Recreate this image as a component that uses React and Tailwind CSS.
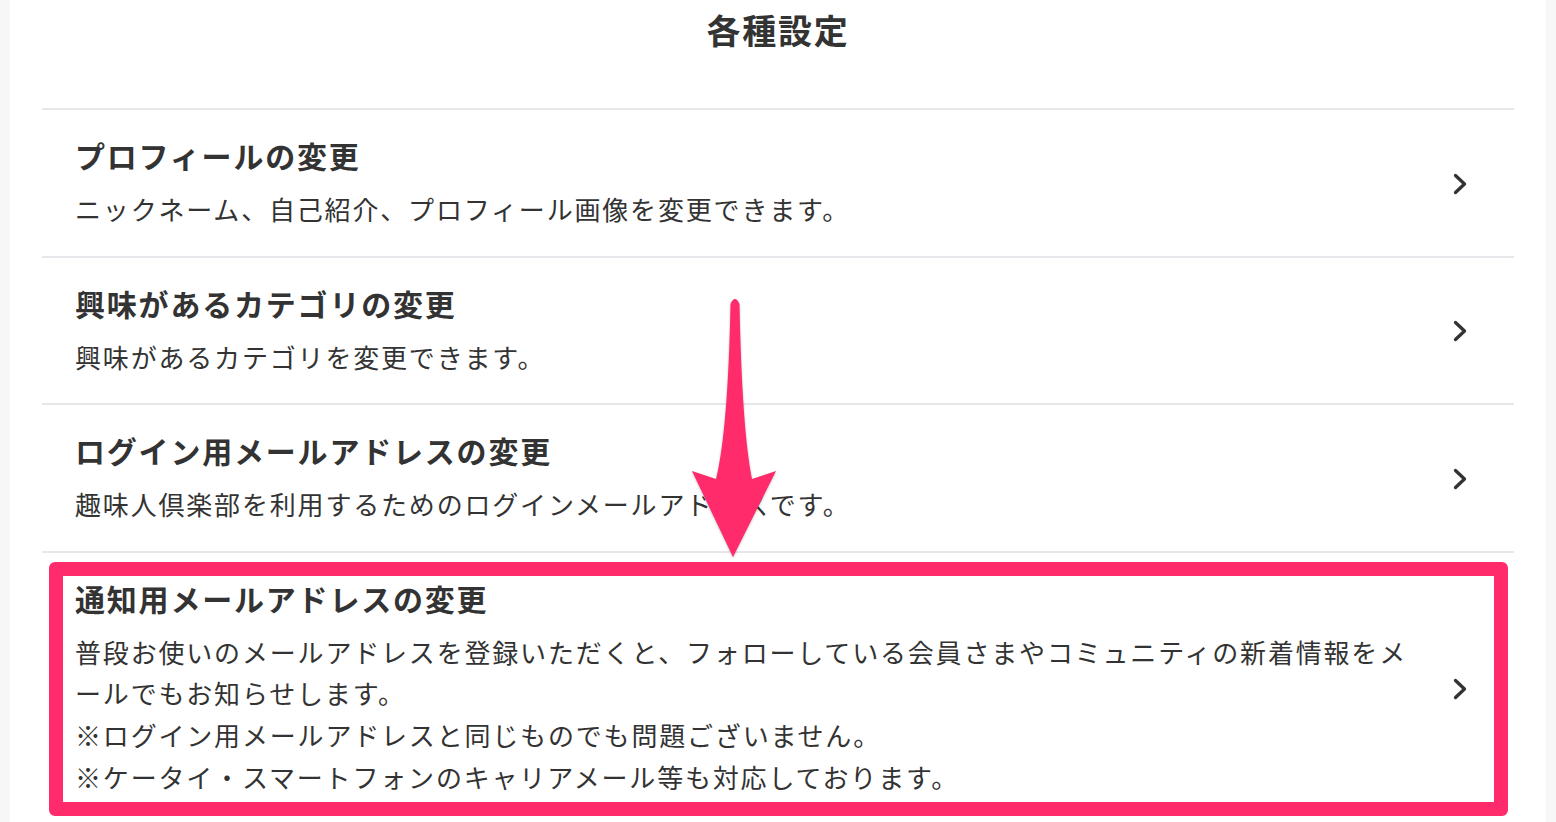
import React from 'react';

const font = "font-['Liberation_Sans','Noto_Sans_CJK_JP',sans-serif]";

const items = [
  {
    title: 'プロフィールの変更',
    lines: ['ニックネーム、自己紹介、プロフィール画像を変更できます。'],
  },
  {
    title: '興味があるカテゴリの変更',
    lines: ['興味があるカテゴリを変更できます。'],
  },
  {
    title: 'ログイン用メールアドレスの変更',
    lines: ['趣味人倶楽部を利用するためのログインメールアドレスです。'],
  },
  {
    title: '通知用メールアドレスの変更',
    lines: [
      '普段お使いのメールアドレスを登録いただくと、フォローしている会員さまやコミュニティの新着情報をメ',
      'ールでもお知らせします。',
      '※ログイン用メールアドレスと同じものでも問題ございません。',
      '※ケータイ・スマートフォンのキャリアメール等も対応しております。',
    ],
    highlight: true,
  },
];

const Chevron = () => (
  <svg width="14" height="22" viewBox="0 0 14 22" className="shrink-0">
    <polyline
      points="2.5,2.5 11.5,11 2.5,19.5"
      fill="none"
      stroke="#333333"
      strokeWidth="3.3"
      strokeLinecap="round"
      strokeLinejoin="round"
    />
  </svg>
);

const SettingRow = ({ item }) => (
  <div className="relative flex items-center border-t-2 border-[#e6e6eb] pl-[33px] pr-[47px] pt-[25px] pb-[23px]">
    <div className="flex-1 min-w-0">
      <h2 className="text-[30px] leading-[45px] font-bold tracking-[0.06em] text-[#333333] mb-[11px]">
        {item.title}
      </h2>
      {item.lines.map((line) => (
        <p key={line} className="text-[26px] leading-[1.6] tracking-[0.07em] text-[#333333] whitespace-nowrap">
          {line}
        </p>
      ))}
    </div>
    <Chevron />

    {/* annotation frame */}
    {item.highlight && (
      <div className="absolute left-[7px] right-[6px] top-[9px] h-[254px] border-[14px] border-[#ff2b6b] rounded-[6px] pointer-events-none" />
    )}
  </div>
);

const App = () => {
  return (
    <div className={`relative h-screen overflow-hidden bg-[#f7f7f7] ${font}`}>
      <div className="mx-[10px] min-h-full bg-white px-[32px]">
        <div className="h-[108px] pt-[10px] text-center">
          <h1 className="text-[34px] leading-[45px] font-bold tracking-[0.05em] text-[#333333]">各種設定</h1>
        </div>
        {items.map((item) => (
          <SettingRow key={item.title} item={item} />
        ))}
      </div>

      {/* annotation arrow */}
      <svg
        className="absolute left-0 top-0 pointer-events-none drop-shadow-[0_1px_1px_rgba(0,0,0,0.25)]"
        width="1556"
        height="822"
        viewBox="0 0 1556 822"
      >
        <path
          d="M 730.5 304 Q 735 294 739.5 304 Q 742 430 752 479 L 776 471 L 733 557 L 692 471 L 716 479 Q 728 430 730.5 304 Z"
          fill="#ff2b6b"
        />
      </svg>
    </div>
  );
};

export default App;
